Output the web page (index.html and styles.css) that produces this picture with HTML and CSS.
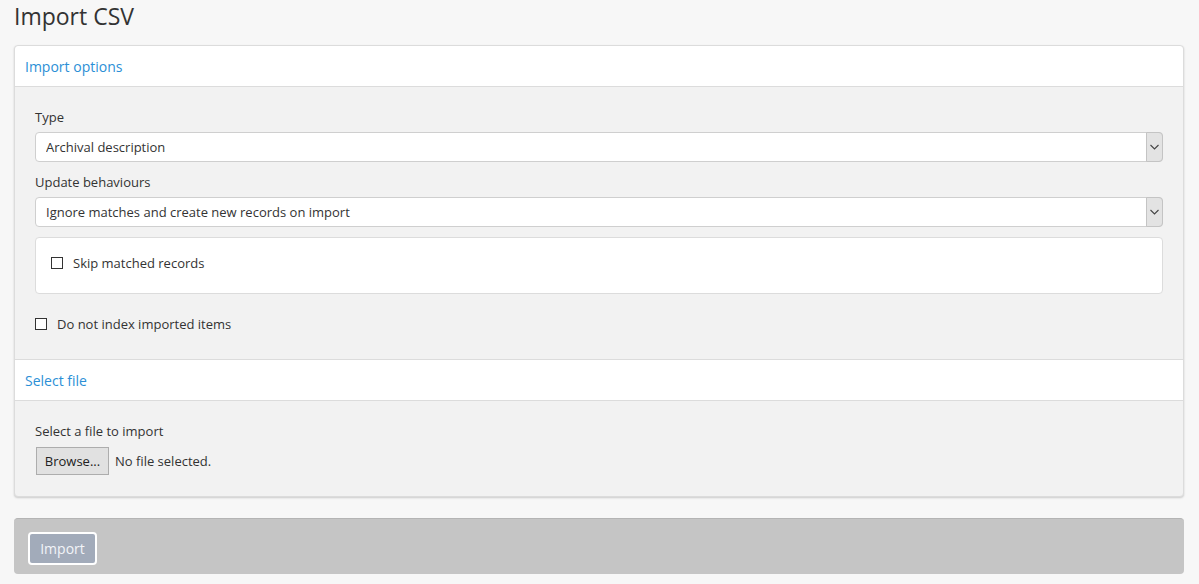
FILE: index.html
```html
<!DOCTYPE html>
<html lang="en">
<head>
<meta charset="utf-8">
<title>Import CSV</title>
<link rel="stylesheet" href="styles.css">
</head>
<body>
<h1 class="page-title">Import CSV</h1>
<form class="import-form">
  <div class="panel">
    <div class="panel-heading panel-heading-first">Import options</div>
    <div class="panel-body">
      <label class="field-label">Type</label>
      <div class="select-wrap">
        <select class="select"><option>Archival description</option></select>
        <span class="select-arrow"><svg width="9" height="6" viewBox="0 0 9 6"><path d="M0.5 1 L4.5 5 L8.5 1" fill="none" stroke="#444" stroke-width="1.1"/></svg></span>
      </div>
      <label class="field-label">Update behaviours</label>
      <div class="select-wrap">
        <select class="select"><option>Ignore matches and create new records on import</option></select>
        <span class="select-arrow"><svg width="9" height="6" viewBox="0 0 9 6"><path d="M0.5 1 L4.5 5 L8.5 1" fill="none" stroke="#444" stroke-width="1.1"/></svg></span>
      </div>
      <div class="well">
        <label class="check-row"><input type="checkbox" class="check"><span>Skip matched records</span></label>
      </div>
      <label class="check-row check-row-outer"><input type="checkbox" class="check"><span>Do not index imported items</span></label>
    </div>
    <div class="panel-heading">Select file</div>
    <div class="panel-body panel-body-file">
      <label class="field-label field-label-file">Select a file to import</label>
      <div class="file-row">
        <span class="browse-btn">Browse...</span>
        <span class="file-status">No file selected.</span>
      </div>
    </div>
  </div>
  <div class="actions">
    <span class="import-btn">Import</span>
  </div>
</form>
</body>
</html>
```
FILE: styles.css
```css
html, body {
  margin: 0;
  padding: 0;
}
body {
  background: #f7f7f7;
  font-family: "Open Sans", "Liberation Sans", sans-serif;
  color: #333;
  font-size: 13px;
  padding: 0 15px 0 14px;
  height: 584px;
  box-sizing: border-box;
  overflow: hidden;
}
.page-title {
  font-weight: 400;
  font-size: 23px;
  line-height: 32px;
  margin: 0;
  height: 45px;
  color: #333;
}
.panel {
  background: #f2f2f2;
  border: 1px solid #dcdcdc;
  border-radius: 4px;
  box-shadow: 0 1px 2px rgba(0,0,0,0.18);
}
.panel-heading {
  background: #fff;
  color: #2b8fd6;
  font-size: 14px;
  height: 39px;
  line-height: 40px;
  padding: 1px 10px 0;
  border-top: 1px solid #dcdcdc;
  border-bottom: 1px solid #dcdcdc;
}
.panel-heading-first {
  border-top: none;
  border-radius: 4px 4px 0 0;
}
.panel-body {
  padding: 20px 20px 25px;
  display: flex;
  flex-direction: column;
}
.panel-body-file {
  padding-bottom: 21px;
}
.field-label {
  display: block;
  line-height: 20px;
  margin-bottom: 5px;
}
.field-label-file {
  margin-bottom: 6px;
}
.select-wrap {
  position: relative;
  margin-bottom: 10px;
}
.select {
  -webkit-appearance: none;
  appearance: none;
  display: block;
  width: 100%;
  height: 30px;
  box-sizing: border-box;
  border: 1px solid #cfcfcf;
  border-radius: 4px;
  background: #fff;
  font-family: inherit;
  font-size: 13px;
  color: #333;
  padding: 0 10px;
  margin: 0;
}
.select-arrow {
  position: absolute;
  right: 0;
  top: 0;
  width: 17px;
  height: 30px;
  box-sizing: border-box;
  background: #e3e3e3;
  border: 1px solid #c4c4c4;
  border-radius: 0 4px 4px 0;
  display: flex;
  align-items: center;
  justify-content: center;
}
.well {
  background: #fff;
  border: 1px solid #dcdcdc;
  border-radius: 4px;
  height: 57px;
  box-sizing: border-box;
  padding: 0 15px 6px;
  display: flex;
  align-items: center;
  margin-bottom: 20px;
}
.check-row {
  display: flex;
  align-items: center;
  line-height: 20px;
}
.check {
  -webkit-appearance: none;
  appearance: none;
  width: 12px;
  height: 12px;
  border: 1px solid #333;
  background: #fff;
  margin: 0 10px 0 0;
  border-radius: 0;
  flex: none;
}
.file-row {
  display: flex;
  align-items: center;
  gap: 6px;
  padding-left: 1px;
}
.browse-btn {
  display: inline-flex;
  align-items: center;
  justify-content: center;
  width: 73px;
  height: 28px;
  box-sizing: border-box;
  background: #e1e1e1;
  border: 1px solid #adadad;
  color: #222;
}
.actions {
  margin-top: 21px;
  background: #c5c5c5;
  border-top: 1px solid #b4b4b4;
  border-radius: 4px;
  height: 56px;
  box-sizing: border-box;
  padding: 13px 14px 0;
  display: flex;
  align-items: flex-start;
}
.import-btn {
  display: inline-flex;
  align-items: center;
  justify-content: center;
  width: 69px;
  height: 33px;
  box-sizing: border-box;
  background: #a2abba;
  border: 2px solid #fff;
  border-radius: 4px;
  color: #f2f4f8;
  font-size: 14px;
}
```
